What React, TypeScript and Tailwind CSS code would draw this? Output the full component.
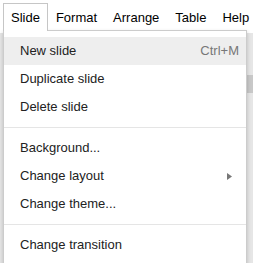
import React from "react";

const font = { fontFamily: '"Liberation Sans", Arial, sans-serif' };

function Row({ label, shortcut, sub, active }: { label: string; shortcut?: string; sub?: boolean; active?: boolean }) {
  return (
    <div className={`flex h-[28px] items-center pl-[16px] pr-[7px] leading-[28px] ${active ? "bg-[#eeeeee]" : ""}`}>
      <span className="flex-1 text-[#222222]">{label}</span>
      {shortcut && <span className="text-[#777777]">{shortcut}</span>}
      {sub && (
        <svg width="6" height="7" viewBox="0 0 6 7" className="mr-[6px]">
          <path d="M0 0 L5 3.5 L0 7 Z" fill="#777777" />
        </svg>
      )}
    </div>
  );
}

function Sep() {
  return <div className="my-[6px] h-px bg-[#e5e5e5]" />;
}

export default function App() {
  const items = ["Format", "Arrange", "Table", "Help"];
  return (
    <div className="relative h-[263px] w-[253px] overflow-hidden bg-[#e6e6e6] text-[13px]" style={font}>
      <div className="flex h-[33px] bg-white pl-[3px] pt-[3px]">
        <div className="relative z-10 h-[28px] border-x border-t border-[#c6c6c6] bg-white px-[7px] leading-[27px] text-black">
          Slide
        </div>
        {items.map((t) => (
          <div key={t} className="h-[27px] border-x border-t border-transparent px-[7px] leading-[27px] text-black">
            {t}
          </div>
        ))}
      </div>
      <div className="absolute right-0 top-[75px] h-[18px] w-[6px] bg-[#c8c8c8]" />
      <div className="absolute left-[3px] top-[30px] w-[244px] border border-[#cccccc] bg-white pt-[6px] pb-[6px] shadow-[0_2px_4px_rgba(0,0,0,0.2)]">
        <Row label="New slide" shortcut="Ctrl+M" active />
        <Row label="Duplicate slide" />
        <Row label="Delete slide" />
        <Sep />
        <Row label="Background..." />
        <Row label="Change layout" sub />
        <Row label="Change theme..." />
        <Sep />
        <Row label="Change transition" />
        <div className="h-[28px]" />
      </div>
    </div>
  );
}
